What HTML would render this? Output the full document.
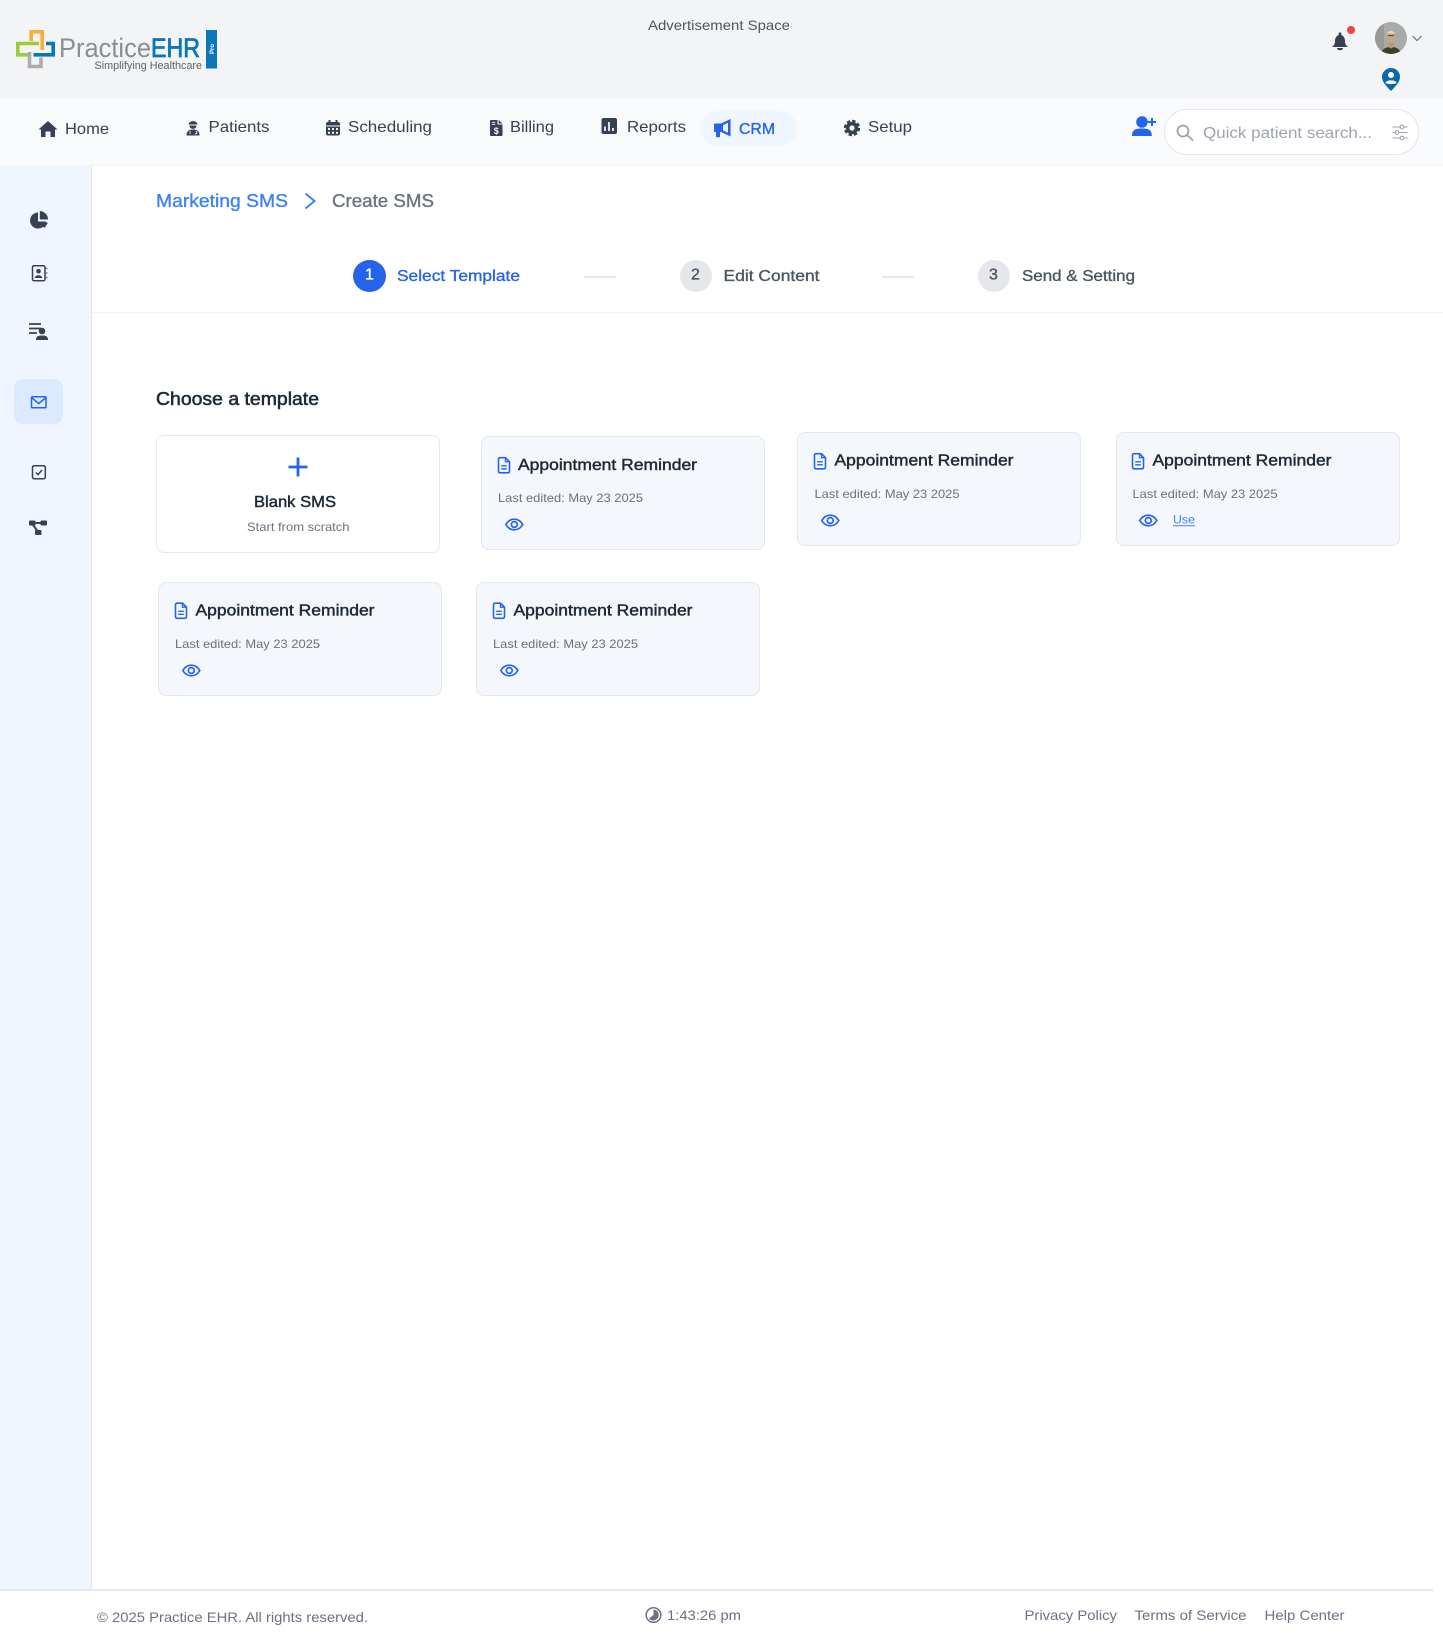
<!DOCTYPE html>
<html lang="en"><head><meta charset="utf-8"><title>Create SMS</title>
<style>
html,body{margin:0;padding:0;background:#fff}
body{position:relative;width:1443px;height:1643px;overflow:hidden;font-family:"Liberation Sans",sans-serif}
.b{position:absolute;box-sizing:border-box}
.i{position:absolute;overflow:visible}
.card{position:absolute;box-sizing:border-box;width:284px;height:114px;background:#f4f7fb;border:1px solid #e5e7eb;border-radius:8px}
#t{position:absolute;left:0;top:0;width:1443px;height:1643px}
#t text{font-family:"Liberation Sans",sans-serif;white-space:pre}
.m{stroke-width:.35px}
.s{stroke-width:.45px}
</style></head><body>
<div class="b" style="left:0;top:0;width:1443px;height:98px;background:#f3f4f6"></div>
<div class="b" style="left:0;top:98px;width:1443px;height:68px;background:#f9fafb;border-bottom:1px solid #f3f4f6"></div>
<div class="b" style="left:0;top:166px;width:92px;height:1424px;background:#eff6ff;border-right:1px solid #e5e7eb"></div>
<div class="b" style="left:92px;top:312px;width:1351px;height:1px;background:#f3f4f6"></div>
<div class="b" style="left:0;top:1589px;width:1433px;height:2px;background:#e5e7eb"></div>
<div class="b" style="left:700px;top:111px;width:97px;height:35px;background:#eff6ff;border-radius:18px"></div>
<div class="b" style="left:1163.500px;top:109px;width:255px;height:46px;background:#fff;border:1px solid #e5e7eb;border-radius:23px"></div>
<div class="b" style="left:14px;top:379px;width:49px;height:45px;background:#dbeafe;border-radius:9px"></div>
<div class="b" style="left:353px;top:260px;width:33px;height:32px;background:#2563eb;border-radius:50%"></div>
<div class="b" style="left:679.500px;top:260px;width:32px;height:32px;background:#e5e7eb;border-radius:50%"></div>
<div class="b" style="left:977.500px;top:260px;width:32px;height:32px;background:#e5e7eb;border-radius:50%"></div>
<div class="b" style="left:584px;top:276px;width:32px;height:2px;background:#e5e7eb"></div>
<div class="b" style="left:882px;top:276px;width:32px;height:2px;background:#e5e7eb"></div>
<div class="b" style="left:156px;top:435px;width:284px;height:118px;background:#fff;border:1px solid #e5e7eb;border-radius:8px"></div>
<div class="card" style="left:481px;top:436px"></div>
<div class="card" style="left:797px;top:432px"></div>
<div class="card" style="left:1115.500px;top:432px"></div>
<div class="card" style="left:158px;top:582px"></div>
<div class="card" style="left:476px;top:582px"></div>

<svg class="i" style="left:0;top:0" width="1443" height="1643" viewBox="0 0 1443 1643">
<defs>
<g id="doc"><path d="M1 2.200C1 1.300 1.700.7 2.500.7H8L12 4.700V14.300C12 15.200 11.300 15.800 10.500 15.800H2.500C1.700 15.800 1 15.200 1 14.300Z" fill="none" stroke="#2563eb" stroke-width="1.600"/><path d="M8 1V4.700H12M3.700 8.800H9.300M3.700 11.800H9.300" fill="none" stroke="#2563eb" stroke-width="1.400"/></g>
<g id="eye"><path d="M.8 6C3 2.300 6 .7 9.300.7S15.600 2.300 17.800 6C15.600 9.700 12.600 11.300 9.300 11.300S3 9.700.8 6Z" fill="none" stroke="#2563eb" stroke-width="1.700"/><circle cx="9.300" cy="6" r="2.900" fill="none" stroke="#2563eb" stroke-width="1.700"/></g>
</defs>
<!-- logo -->
<g fill="none" stroke-width="3.600">
<path d="M39 43.500H17.800V54.800H28" stroke="#9ccb3b"/>
<path d="M29.500 52V66.500H41V57.500" stroke="#adadad"/>
<path d="M33.500 54.800H53.200V43.500H46" stroke="#0b76b8"/>
<path d="M31.200 41V31.800H42.200V50" stroke="#f9ae3b"/>
</g>
<rect x="206" y="30" width="11" height="38.500" fill="#0b76b8"/>
<!-- bell -->
<g transform="translate(-1,0)">
<path d="M1341 33.500V34.500C1344.500 35.200 1346 38 1346 41C1346 44 1347 45.500 1349 47H1333C1335 45.500 1336 44 1336 41C1336 38 1337.500 35.200 1341 34.500V33.500C1341 32.200 1341 32.200 1341 33.500Z" fill="#374151"/>
<circle cx="1341" cy="33.800" r="1.400" fill="#374151"/>
<path d="M1338 48H1344C1344 51 1338 51 1338 48Z" fill="#374151"/>
</g>
<circle cx="1351" cy="30" r="4" fill="#ef4444"/>
<!-- avatar -->
<clipPath id="av"><circle cx="1391" cy="38" r="16"/></clipPath>
<g clip-path="url(#av)"><rect x="1375" y="22" width="32" height="32" fill="#a9aba8"/><rect x="1375" y="22" width="9" height="32" fill="#989a98"/>
<path d="M1381 54C1382 49 1385 47.500 1391 46.500C1397 47.500 1400 49 1401 54Z" fill="#3d3f2c"/>
<ellipse cx="1391" cy="37" rx="4.200" ry="6.500" fill="#c4a590"/><path d="M1387 33.500C1388 30 1394 30 1395 33.500Z" fill="#ded7d1"/><rect x="1388" y="35" width="6" height="1.100" fill="#5a4a40"/><path d="M1388 43H1394V47L1391 48.500L1388 47Z" fill="#b9977f"/></g>
<path d="M1412.500 36L1417 40.500L1421.500 36" fill="none" stroke="#6b7280" stroke-width="1.200"/>
<!-- pin -->
<path d="M1391 68C1396 68 1400 72 1400 77C1400 82 1395 87 1391 91C1387 87 1382 82 1382 77C1382 72 1386 68 1391 68Z" fill="#0a69ae"/>
<circle cx="1391" cy="75" r="3" fill="#fff"/><path d="M1385.500 83C1386 79.500 1396 79.500 1396.500 83C1394 84.500 1388 84.500 1385.500 83Z" fill="#fff"/>
<!-- home -->
<path d="M48 121L57.500 129.500H55V137H50.500V131.500H45.500V137H41V129.500H38.500Z" fill="#374151"/>
<!-- patients -->
<path d="M188.500 124.500C189 120 197 120 197.500 124.500Z" fill="#374151"/><path d="M189.500 125.500H196.500C196.500 130 189.500 130 189.500 125.500Z" fill="#374151"/>
<path d="M186.500 135.500C186.500 131 189 129.500 193 129.500C197 129.500 199.500 131 199.500 135.500Z" fill="#374151"/><path d="M190 131V134M196 131C197.500 132.500 197 134 195 134" stroke="#f9fafb" fill="none" stroke-width=".9"/>
<!-- calendar -->
<path d="M326 123.500C326 122.500 327 122 328 122H338C339 122 340 122.500 340 123.500V125.500H326ZM326 126.500H340V134C340 135 339 135.500 338 135.500H328C327 135.500 326 135 326 134Z" fill="#374151"/>
<rect x="328.500" y="120" width="2" height="3.500" fill="#374151"/><rect x="335.500" y="120" width="2" height="3.500" fill="#374151"/>
<g fill="#f9fafb"><rect x="328" y="128" width="2" height="2"/><rect x="332" y="128" width="2" height="2"/><rect x="336" y="128" width="2" height="2"/><rect x="328" y="131.800" width="2" height="2"/><rect x="332" y="131.800" width="2" height="2"/><rect x="336" y="131.800" width="2" height="2"/></g>
<!-- billing -->
<path d="M490 121C490 120.400 490.500 120 491 120H497.500V124.500H502.500V135C502.500 135.600 502 136 501.500 136H491C490.500 136 490 135.600 490 135Z" fill="#374151"/>
<path d="M498.700 120L502.500 123.500H498.700Z" fill="#374151"/>
<path d="M491.800 122.300H495.300M491.800 124.300H495.300" stroke="#f9fafb" stroke-width=".8"/>
<!-- reports -->
<rect x="601.500" y="118" width="15.500" height="16" rx="2" fill="#374151"/><path d="M605 126.500V131M609 122V131M613 128V131" stroke="#f9fafb" stroke-width="1.700"/>
<!-- crm -->
<path d="M714 124.500C714 123.800 714.500 123.500 715 123.500H721L730.500 119V136.500L721 132H720V136.800C720 137.500 716 137.500 716 136.800V132H715C714.500 132 714 131.700 714 131Z" fill="#2563eb"/><path d="M723 125.200L728 122.800V132.800L723 130.400Z" fill="#eff6ff"/>
<!-- gear -->
<circle cx="852" cy="128" r="6.300" fill="#374151"/><circle cx="852" cy="128" r="7" fill="none" stroke="#374151" stroke-width="2.400" stroke-dasharray="3.300 2.200"/><circle cx="852" cy="128" r="2.600" fill="#f9fafb"/>
<!-- add user -->
<circle cx="1142" cy="122" r="5.800" fill="#2563eb"/><path d="M1132 135.500C1132 129.500 1136 128.500 1142 128.500C1148 128.500 1151.800 129.500 1151.800 135.500C1151.800 136 1151 136 1150.500 136H1133.500C1133 136 1132 136 1132 135.500Z" fill="#2563eb"/><path d="M1152 118V126M1148 122H1156" stroke="#2563eb" stroke-width="2"/>
<!-- search -->
<circle cx="1183" cy="131" r="5.500" fill="none" stroke="#9ca3af" stroke-width="1.800"/><path d="M1187 135L1193 140.500" stroke="#9ca3af" stroke-width="1.800"/>
<!-- filter -->
<path d="M1392.500 127H1407.500M1392.500 132.500H1407.500M1392.500 138H1407.500" stroke="#9ca3af" stroke-width="1.100"/>
<g fill="#fff" stroke="#9ca3af" stroke-width="1.100"><circle cx="1402" cy="127" r="1.800"/><circle cx="1397" cy="132.500" r="1.800"/><circle cx="1402" cy="138" r="1.800"/></g>
<!-- sidebar icons -->
<path d="M38 212.500A8 8 0 1 0 46 221.500H38Z" fill="#374151"/><path d="M39.800 211V219.500H48A8.500 8.500 0 0 0 39.800 211Z" fill="#374151"/><path d="M41 222.500H48L44.500 228C43 227 41.800 225 41 222.500Z" fill="#374151"/>
<rect x="32.500" y="265.700" width="12.500" height="15" rx="1.500" fill="none" stroke="#374151" stroke-width="1.500"/><circle cx="38.500" cy="271.200" r="2.300" fill="#374151"/><path d="M34.700 278C35 274.300 42 274.300 42.300 278Z" fill="#374151"/><path d="M45.500 268.500H47.500M45.500 273H47.500M45.500 277.500H47.500" stroke="#6b7280" stroke-width="1.300"/>
<path d="M29 324H41M29 328.500H41M29 333H37" stroke="#374151" stroke-width="1.800"/><circle cx="42" cy="331" r="3.300" fill="#374151"/><path d="M36 340C36 336 38.500 335.500 42 335.500C45.500 335.500 48 336 48 340Z" fill="#374151"/>
<rect x="31.500" y="396.800" width="14.500" height="11" rx="1.200" fill="none" stroke="#2563eb" stroke-width="1.500"/><path d="M32 398L38.700 403.500L45.500 398" fill="none" stroke="#2563eb" stroke-width="1.500"/>
<rect x="32.500" y="465.700" width="12.800" height="13" rx="1.500" fill="none" stroke="#374151" stroke-width="1.500"/><path d="M35.800 472.500L38 474.700L42 470" fill="none" stroke="#374151" stroke-width="1.500"/>
<g fill="#374151"><rect x="29" y="520.500" width="6.500" height="5" rx="1"/><rect x="40.500" y="520.500" width="6.500" height="5" rx="1"/><rect x="35" y="530" width="6.500" height="5" rx="1"/></g><path d="M35 523H41M33 525L37.500 531" stroke="#374151" stroke-width="2"/>
<!-- breadcrumb chevron -->
<path d="M305.500 193.500L314.500 201L305.500 208.500" fill="none" stroke="#3b82f6" stroke-width="2"/>
<!-- plus -->
<path d="M298 457.500V476.500M288.500 467H307.500" stroke="#2563eb" stroke-width="2.800"/>
<!-- card icons -->
<use href="#doc" x="497.500" y="457"/><use href="#eye" x="505" y="518.500"/>
<use href="#doc" x="813.500" y="453"/><use href="#eye" x="821" y="514.500"/>
<use href="#doc" x="1131.500" y="453"/><use href="#eye" x="1139" y="514.500"/>
<use href="#doc" x="174.500" y="602.500"/><use href="#eye" x="182" y="664.500"/>
<use href="#doc" x="492.500" y="602.500"/><use href="#eye" x="500" y="664.500"/>
<!-- clock -->
<circle cx="653.500" cy="1615" r="7.300" fill="none" stroke="#6b7280" stroke-width="1.500"/><path d="M653.500 1609.500A5.500 5.500 0 1 1 649 1618.500L653.500 1615Z" fill="#6b7280"/>
<path d="M1173 525.800H1195" stroke="#3b82f6" stroke-width="1"/>
</svg>

<svg id="t" viewBox="0 0 1443 1643">
<text x="59" y="57" font-size="27" fill="#8a8e91" textLength="92" lengthAdjust="spacingAndGlyphs">Practice</text>
<text x="151" y="57" font-size="27" fill="#0b76b8" stroke="#0b76b8" stroke-width=".8" textLength="49" lengthAdjust="spacingAndGlyphs">EHR</text>
<text x="94.500" y="69" font-size="11" fill="#5f6366" textLength="107.500" lengthAdjust="spacingAndGlyphs">Simplifying Healthcare</text>
<text transform="translate(214,54) rotate(-90)" font-size="6" font-weight="700" fill="#fff">Pro</text>
<text x="648" y="30" font-size="14" fill="#4b5563" textLength="142" lengthAdjust="spacingAndGlyphs">Advertisement Space</text>

<text x="65" y="134" font-size="16" fill="#374151" textLength="44" lengthAdjust="spacingAndGlyphs">Home</text>
<text x="208.500" y="132" font-size="16" fill="#374151" textLength="61" lengthAdjust="spacingAndGlyphs">Patients</text>
<text x="348" y="132" font-size="16" fill="#374151" textLength="84" lengthAdjust="spacingAndGlyphs">Scheduling</text>
<text x="510" y="132" font-size="16" fill="#374151" textLength="44" lengthAdjust="spacingAndGlyphs">Billing</text>
<text x="496.300" y="134.200" font-size="9" font-weight="700" fill="#f9fafb" text-anchor="middle">$</text>
<text x="627" y="132" font-size="16" fill="#374151" textLength="59" lengthAdjust="spacingAndGlyphs">Reports</text>
<text x="739" y="134" font-size="16" fill="#2563eb" stroke="#2563eb" class="m" textLength="36" lengthAdjust="spacingAndGlyphs">CRM</text>
<text x="868" y="132" font-size="16" fill="#374151" textLength="44" lengthAdjust="spacingAndGlyphs">Setup</text>
<text x="1203" y="138" font-size="16" fill="#9ca3af" textLength="169" lengthAdjust="spacingAndGlyphs">Quick patient search...</text>

<text x="156" y="207" font-size="18" fill="#3b82f6" stroke="#3b82f6" class="m" textLength="132" lengthAdjust="spacingAndGlyphs">Marketing SMS</text>
<text x="332" y="207" font-size="18" fill="#6b7280" stroke="#6b7280" class="m" textLength="102" lengthAdjust="spacingAndGlyphs">Create SMS</text>

<text x="369.500" y="279.500" font-size="16" fill="#fff" stroke="#fff" class="m" text-anchor="middle">1</text>
<text x="397" y="281" font-size="16" fill="#2563eb" stroke="#2563eb" class="m" textLength="123" lengthAdjust="spacingAndGlyphs">Select Template</text>
<text x="695.500" y="279.500" font-size="16" fill="#4b5563" stroke="#4b5563" class="m" text-anchor="middle">2</text>
<text x="723.500" y="281" font-size="16" fill="#4b5563" stroke="#4b5563" class="m" textLength="96" lengthAdjust="spacingAndGlyphs">Edit Content</text>
<text x="993.500" y="279.500" font-size="16" fill="#4b5563" stroke="#4b5563" class="m" text-anchor="middle">3</text>
<text x="1022" y="281" font-size="16" fill="#4b5563" stroke="#4b5563" class="m" textLength="113" lengthAdjust="spacingAndGlyphs">Send &amp; Setting</text>

<text x="156" y="405" font-size="18" fill="#1f2937" stroke="#1f2937" stroke-width=".55" textLength="163" lengthAdjust="spacingAndGlyphs">Choose a template</text>

<text x="254" y="507" font-size="16" fill="#1f2937" stroke="#1f2937" class="s" textLength="82" lengthAdjust="spacingAndGlyphs">Blank SMS</text>
<text x="247" y="531" font-size="12" fill="#6b7280" textLength="102.500" lengthAdjust="spacingAndGlyphs">Start from scratch</text>

<text x="518" y="470" font-size="16" fill="#1f2937" stroke="#1f2937" class="s" textLength="179" lengthAdjust="spacingAndGlyphs">Appointment Reminder</text>
<text x="498" y="502" font-size="12" fill="#6b7280" textLength="145" lengthAdjust="spacingAndGlyphs">Last edited: May 23 2025</text>
<text x="834.500" y="465.500" font-size="16" fill="#1f2937" stroke="#1f2937" class="s" textLength="179" lengthAdjust="spacingAndGlyphs">Appointment Reminder</text>
<text x="814.500" y="498" font-size="12" fill="#6b7280" textLength="145" lengthAdjust="spacingAndGlyphs">Last edited: May 23 2025</text>
<text x="1152.500" y="465.500" font-size="16" fill="#1f2937" stroke="#1f2937" class="s" textLength="179" lengthAdjust="spacingAndGlyphs">Appointment Reminder</text>
<text x="1132.500" y="498" font-size="12" fill="#6b7280" textLength="145" lengthAdjust="spacingAndGlyphs">Last edited: May 23 2025</text>
<text x="1173" y="523.500" font-size="12" fill="#3b82f6" textLength="22" lengthAdjust="spacingAndGlyphs">Use</text>
<text x="195.500" y="615.500" font-size="16" fill="#1f2937" stroke="#1f2937" class="s" textLength="179" lengthAdjust="spacingAndGlyphs">Appointment Reminder</text>
<text x="175" y="648" font-size="12" fill="#6b7280" textLength="145" lengthAdjust="spacingAndGlyphs">Last edited: May 23 2025</text>
<text x="513.500" y="615.500" font-size="16" fill="#1f2937" stroke="#1f2937" class="s" textLength="179" lengthAdjust="spacingAndGlyphs">Appointment Reminder</text>
<text x="493" y="648" font-size="12" fill="#6b7280" textLength="145" lengthAdjust="spacingAndGlyphs">Last edited: May 23 2025</text>

<text x="97" y="1622" font-size="14" fill="#6b7280" textLength="271" lengthAdjust="spacingAndGlyphs">© 2025 Practice EHR. All rights reserved.</text>
<text x="667" y="1620" font-size="14" fill="#6b7280" textLength="74" lengthAdjust="spacingAndGlyphs">1:43:26 pm</text>
<text x="1024.500" y="1620" font-size="14" fill="#6b7280" textLength="92.500" lengthAdjust="spacingAndGlyphs">Privacy Policy</text>
<text x="1134.500" y="1620" font-size="14" fill="#6b7280" textLength="112" lengthAdjust="spacingAndGlyphs">Terms of Service</text>
<text x="1264.500" y="1620" font-size="14" fill="#6b7280" textLength="80" lengthAdjust="spacingAndGlyphs">Help Center</text>
</svg>
</body></html>
